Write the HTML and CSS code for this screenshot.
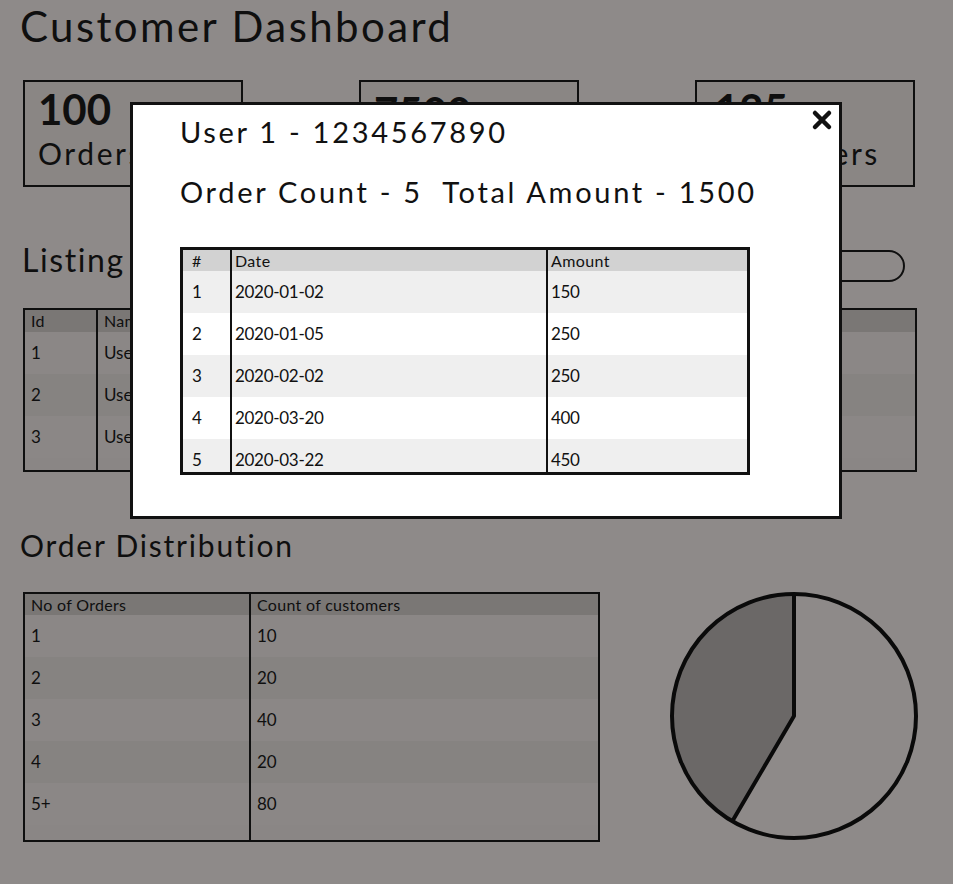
FILE: index.html
```html
<!DOCTYPE html>
<html lang="en">
<head>
<meta charset="utf-8">
<title>Customer Dashboard</title>
<link rel="stylesheet" href="styles.css">
</head>
<body>
<main class="dashboard">
  <h1 class="title">Customer Dashboard</h1>

  <section class="stats">
    <div class="stat"><div class="stat-value">100</div><div class="stat-label">Orders</div></div>
    <div class="stat stat-mid"><div class="stat-value">7500</div><div class="stat-label">Amount</div></div>
    <div class="stat stat-right"><div class="stat-value">125</div><div class="stat-label">Customers</div></div>
  </section>

  <section class="listing-head">
    <h2 class="section-title">Listing</h2>
    <div class="search"></div>
  </section>

  <table class="grid listing">
    <colgroup><col class="c-id"><col class="c-name"><col class="c-mobile"><col class="c-count"><col></colgroup>
    <thead><tr><th>Id</th><th>Name</th><th>Mobile</th><th>Orders</th><th>Amount</th></tr></thead>
    <tbody>
      <tr><td>1</td><td>User 1</td><td>1234567890</td><td>5</td><td>1500</td></tr>
      <tr class="alt"><td>2</td><td>User 2</td><td>1234567891</td><td>3</td><td>900</td></tr>
      <tr><td>3</td><td>User 3</td><td>1234567892</td><td>2</td><td>600</td></tr>
      <tr class="filler"><td></td><td></td><td></td><td></td><td></td></tr>
    </tbody>
  </table>

  <h2 class="section-title dist-title">Order Distribution</h2>

  <section class="dist-row">
    <table class="grid dist">
      <colgroup><col class="c-orders"><col></colgroup>
      <thead><tr><th>No of Orders</th><th>Count of customers</th></tr></thead>
      <tbody>
        <tr><td>1</td><td>10</td></tr>
        <tr class="alt"><td>2</td><td>20</td></tr>
        <tr><td>3</td><td>40</td></tr>
        <tr class="alt"><td>4</td><td>20</td></tr>
        <tr><td>5+</td><td>80</td></tr>
        <tr class="filler"><td></td><td></td></tr>
      </tbody>
    </table>
    <svg class="pie" width="250" height="250" viewBox="0 0 250 250">
      <circle cx="125" cy="125" r="122" class="pie-light"/>
      <path d="M125,125 L125,3 A122,122 0 0,0 63.3,230.2 Z" class="pie-dark"/>
      <polyline points="125,3 125,125 63.3,230.2" class="pie-line"/>
      <circle cx="125" cy="125" r="122" class="pie-ring"/>
    </svg>
  </section>
</main>

<div class="overlay"></div>

<div class="modal">
  <button class="close" aria-label="Close">
    <svg width="22" height="22" viewBox="0 0 22 22"><path d="M4 4 L18 18 M18 4 L4 18"/></svg>
  </button>
  <p class="modal-line">User 1 - 1234567890</p>
  <p class="modal-line">Order Count - 5&nbsp; Total Amount - 1500</p>
  <div class="detail-wrap">
    <table class="detail">
      <colgroup><col class="d-num"><col class="d-date"><col></colgroup>
      <thead><tr><th>#</th><th>Date</th><th>Amount</th></tr></thead>
      <tbody>
        <tr class="shade"><td>1</td><td>2020-01-02</td><td>150</td></tr>
        <tr><td>2</td><td>2020-01-05</td><td>250</td></tr>
        <tr class="shade"><td>3</td><td>2020-02-02</td><td>250</td></tr>
        <tr><td>4</td><td>2020-03-20</td><td>400</td></tr>
        <tr class="shade"><td>5</td><td>2020-03-22</td><td>450</td></tr>
      </tbody>
    </table>
  </div>
</div>
</body>
</html>
```

FILE: styles.css
```css
* { box-sizing: border-box; }

html, body { margin: 0; }

body {
  position: relative;
  width: 953px;
  height: 884px;
  overflow: hidden;
  background: #ede6e4;
  font-family: Lato, "Noto Sans", sans-serif;
  color: #1a1a1a;
}

.dashboard { padding-top: 5px; }

.title {
  margin: 0 0 0 20px;
  font-size: 42px;
  line-height: 42px;
  font-weight: 400;
  letter-spacing: 2.4px;
}

.stats {
  display: flex;
  gap: 116px;
  margin-top: 33px;
  padding-left: 23px;
}

.stat {
  width: 220px;
  height: 107px;
  border: 2px solid #1a1a1a;
  background: #e6dfdd;
  padding: 6px 0 0 13px;
}

.stat-value {
  font-size: 42px;
  line-height: 42px;
  font-weight: 700;
}

.stat-label {
  margin-top: 8px;
  font-size: 30px;
  line-height: 30px;
  letter-spacing: 2.6px;
}

.stat-mid .stat-value { margin-top: 3px; }
.stat-right { padding-left: 18px; }

.listing-head {
  display: flex;
  justify-content: space-between;
  align-items: flex-start;
  margin-top: 57px;
  padding: 0 48px 0 22px;
}

.section-title {
  margin: 0;
  font-size: 32px;
  line-height: 32px;
  font-weight: 400;
  letter-spacing: 1.6px;
}

.search {
  width: 210px;
  height: 32px;
  margin-top: 6px;
  border: 2px solid #1a1a1a;
  border-radius: 16px;
  background: #ede6e4;
}

/* backdrop tables */
.grid {
  border-collapse: separate;
  border-spacing: 0;
  table-layout: fixed;
  border: 2px solid #1a1a1a;
  font-size: 17px;
  line-height: 20px;
}

.grid th, .grid td {
  padding: 0 0 0 6px;
  text-align: left;
  font-weight: 400;
  vertical-align: middle;
  white-space: nowrap;
  overflow: hidden;
}

.grid th { height: 22px; background: #cbc6c4; font-size: 16px; letter-spacing: 0.3px; }
.grid td { height: 42px; background: #e8e2e0; }
.grid tr.alt td { background: #e0dad8; }
.grid tr.filler td { height: 12px; background: #e6e0de; }

.grid th:not(:last-child), .grid td:not(:last-child) { border-right: 2px solid #1a1a1a; }

.listing { margin: 26px 0 0 23px; width: 894px; }
.listing .c-id { width: 73px; }
.listing .c-name { width: 230px; }
.listing .c-mobile { width: 230px; }
.listing .c-count { width: 150px; }
.listing th:nth-child(n+3), .listing td:nth-child(n+3) { border-right: 0; }

.dist-title {
  margin: 58px 0 0 20px;
  font-size: 30px;
  line-height: 30px;
  letter-spacing: 1.8px;
}

.dist-row {
  display: flex;
  align-items: flex-start;
  margin-top: 32px;
  padding-left: 23px;
}

.dist { width: 577px; }
.dist .c-orders { width: 226px; }
.dist th { height: 21px; }
.dist tr.filler td { height: 15px; }

.pie { margin: -1px 0 0 69px; flex: none; }
.pie-light { fill: #ede6e4; }
.pie-dark { fill: #b2adac; }
.pie-line { fill: none; stroke: #111; stroke-width: 4; stroke-linejoin: round; }
.pie-ring { fill: none; stroke: #111; stroke-width: 4; }

/* modal */
.overlay {
  position: fixed;
  inset: 0;
  background: rgba(0, 0, 0, 0.4);
}

.modal {
  position: absolute;
  left: 130px;
  top: 102px;
  width: 712px;
  height: 417px;
  background: #fff;
  border: 3px solid #111;
  padding: 12px 0 0 47px;
  color: #111;
}

.close {
  position: absolute;
  top: 4px;
  right: 6px;
  width: 22px;
  height: 22px;
  padding: 0;
  border: 0;
  background: none;
}

.close svg { display: block; }
.close path { stroke: #111; stroke-width: 4.5; stroke-linecap: round; fill: none; }

.modal-line {
  margin: 0;
  font-size: 29px;
  line-height: 29px;
  letter-spacing: 2.7px;
}

.modal-line + .modal-line { margin-top: 31px; }

.detail-wrap {
  margin-top: 41px;
  width: 570px;
  height: 228px;
  border: 3px solid #111;
  overflow: hidden;
}

.detail {
  width: 100%;
  border-collapse: separate;
  border-spacing: 0;
  table-layout: fixed;
  font-size: 17px;
  line-height: 20px;
  letter-spacing: -0.3px;
}

.detail .d-num { width: 49px; }
.detail .d-date { width: 316px; }

.detail th, .detail td {
  padding: 0 0 0 3px;
  text-align: left;
  font-weight: 400;
  vertical-align: middle;
  white-space: nowrap;
}

.detail th:first-child, .detail td:first-child { padding-left: 9px; }
.detail th:not(:last-child), .detail td:not(:last-child) { border-right: 2px solid #111; }

.detail th { height: 21px; background: #d2d2d2; font-size: 16px; letter-spacing: 0.4px; }
.detail td { height: 42px; background: #fff; }
.detail tr.shade td { background: #efefef; }
```
